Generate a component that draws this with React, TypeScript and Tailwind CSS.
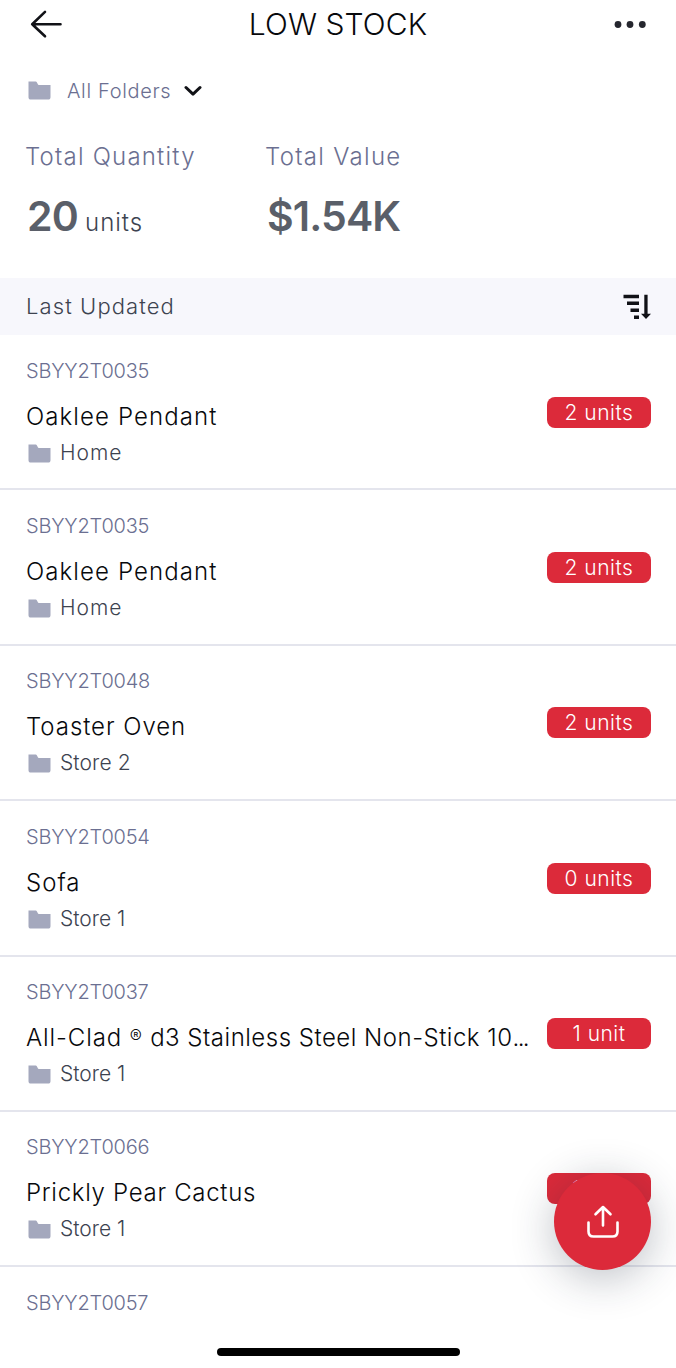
import type { ReactNode } from "react";

interface StockItem {
  id: number;
  code: string;
  name: ReactNode;
  nameClass: string;
  folder: string;
  folderClass: string;
  stock: string;
}

const longName = (
  <>
    All-Clad <sup className="relative top-[-3px] mr-[1px] align-baseline text-[18px] leading-none tracking-normal">®</sup>
    <span className="tracking-[0.5px]"> d3 Stainless Steel Non-Stick 10</span>
    <span className="tracking-[-1.7px]">...</span>
  </>
);

const items: StockItem[] = [
  { id: 1, code: "SBYY2T0035", name: "Oaklee Pendant", nameClass: "tracking-[1.1px]", folder: "Home", folderClass: "tracking-[1px]", stock: "2 units" },
  { id: 2, code: "SBYY2T0035", name: "Oaklee Pendant", nameClass: "tracking-[1.1px]", folder: "Home", folderClass: "tracking-[1px]", stock: "2 units" },
  { id: 3, code: "SBYY2T0048", name: "Toaster Oven", nameClass: "tracking-[0.95px]", folder: "Store 2", folderClass: "tracking-[0.1px]", stock: "2 units" },
  { id: 4, code: "SBYY2T0054", name: "Sofa", nameClass: "tracking-[1px]", folder: "Store 1", folderClass: "tracking-[0px]", stock: "0 units" },
  { id: 5, code: "SBYY2T0037", name: longName, nameClass: "tracking-[0.9px]", folder: "Store 1", folderClass: "tracking-[0px]", stock: "1 unit" },
  { id: 6, code: "SBYY2T0066", name: "Prickly Pear Cactus", nameClass: "tracking-[0.7px]", folder: "Store 1", folderClass: "tracking-[0px]", stock: "1 unit" },
];

function FolderIcon() {
  return (
    <svg className="h-[19px] w-[23px] shrink-0" viewBox="0 0 23 19" fill="#a4a8bd">
      <path d="M.5.5h7.2c.5 0 .9.2 1.1.7l1.2 2.4c.1.3.4.4.7.4h11.8v12.2c0 1.4-.9 2.3-2.3 2.3H2.8C1.4 18.500.5 17.600.5 16.200z" />
    </svg>
  );
}

function Header() {
  return (
    <header className="flex h-[49px] items-center justify-between pl-[30px] pr-[30px]">
      <button aria-label="Back">
        <svg className="h-[30px] w-8" viewBox="0 0 32 30" fill="none" stroke="#111217" strokeWidth="2.6" strokeLinecap="round" strokeLinejoin="round">
          <path d="M30.500 14.200H2.200M15 1.900 2.200 14.200 15 26.300" />
        </svg>
      </button>
      <h1 className="text-[30px] font-light leading-[49px] tracking-[0.1px] text-[#08090c]">LOW STOCK</h1>
      <button aria-label="More">
        <svg className="h-2 w-8" viewBox="0 0 32 8" fill="#25262e">
          <circle cx="4" cy="3.500" r="3.400" />
          <circle cx="16" cy="3.500" r="3.400" />
          <circle cx="28.300" cy="3.500" r="3.400" />
        </svg>
      </button>
    </header>
  );
}

function Summary() {
  return (
    <section className="flex h-[147px] pl-[25px] pt-2.5">
      <div className="w-60">
        <h2 className="text-[24px] font-light leading-8 tracking-[1.2px] text-[#6b6f91]">Total Quantity</h2>
        <p className="mt-[15px] flex items-baseline gap-[7px] pl-0.5 leading-[56px] text-[#5a5f69]">
          <span className="text-[41px] font-semibold tracking-[-0.8px]">20</span>
          <span className="text-2xl font-light leading-[56px] tracking-[1px] text-[#3d4350]">units</span>
        </p>
      </div>
      <div>
        <h2 className="text-[24px] font-light leading-8 tracking-[1.3px] text-[#6b6f91]">Total Value</h2>
        <p className="mt-[15px] pl-0.5 text-[41px] font-semibold leading-[56px] tracking-[-0.9px] text-[#5a5f69]">$1.54K</p>
      </div>
    </section>
  );
}

function SortIcon() {
  return (
    <svg className="mt-px h-[26px] w-7" viewBox="0 0 28 26" fill="#101116">
      <path d="M.5.7H16v3.500H.5zM4 7.600h12v3.500H4zM7.500 14.500H16v3.500H7.500zM11 21.500h5v3.500h-5zM21.300.7h3.300v19.100h3.400L23 25l-5-5.200h3.300z" />
    </svg>
  );
}

function Row({ item }: { item: StockItem }) {
  return (
    <li className="flex h-[155.4px] items-start justify-between border-b-2 border-[#e4e5ed] pl-[26px] pr-[25px]">
      <div className="whitespace-nowrap pt-[23.5px] font-light">
        <p className="text-xl leading-6 tracking-[-0.2px] text-[#6b6f91]">{item.code}</p>
        <h3 className={`mt-[18px] text-[24px] leading-8 text-[#08090c] ${item.nameClass}`}>{item.name}</h3>
        <div className="mt-2 flex items-center gap-[9px] pl-0.5 text-[#3d4350]">
          <div className="pt-px">
            <FolderIcon />
          </div>
          <span className={`text-[21px] leading-6 ${item.folderClass}`}>{item.folder}</span>
        </div>
      </div>
      <span className="mt-[61.5px] h-[31px] w-[104px] shrink-0 rounded-lg bg-[#dc2a3a] text-center text-[21px] font-light leading-[31px] tracking-[0.5px] text-white">
        {item.stock}
      </span>
    </li>
  );
}

function App() {
  return (
    <div className="relative h-[1368px] w-[676px] overflow-hidden bg-white font-['Inter',sans-serif]">
      <Header />
      <button className="flex h-[82px] items-center pl-7">
        <FolderIcon />
        <span className="ml-4 mt-0.5 text-xl font-light tracking-[0.65px] text-[#6b6f91]">All Folders</span>
        <svg className="ml-[13px] mt-0.5 h-3 w-[18px]" viewBox="0 0 18 12" fill="none" stroke="#111217" strokeWidth="3" strokeLinecap="round" strokeLinejoin="round">
          <path d="m2 2.500 7 6.700 7-6.700" />
        </svg>
      </button>
      <Summary />
      <div className="flex h-[57px] items-center justify-between bg-[#f7f7fc] pl-[26px] pr-[25px]">
        <span className="text-[22px] font-light tracking-[1.1px] text-[#3d4350]">Last Updated</span>
        <SortIcon />
      </div>
      <ul>
        {items.map((item) => (
          <Row key={item.id} item={item} />
        ))}
      </ul>
      <p className="pl-[26px] pt-[23.5px] text-xl font-light leading-6 tracking-[-0.2px] text-[#6b6f91]">SBYY2T0057</p>

      {/* Floating share button */}
      <button aria-label="Share" className="absolute left-[554px] top-[1172.5px] flex h-[97px] w-[97px] items-center justify-center rounded-full bg-[#dc2a3a] shadow-[0_8px_44px_rgba(30,40,60,0.3)]">
        <svg className="h-[34px] w-8" viewBox="0 0 32 34" fill="none" stroke="white" strokeWidth="2.600" strokeLinecap="round" strokeLinejoin="round">
          <path d="M16 21.500V3M8.500 10.300 16 3l7.500 7.300M1.500 18.500v9q0 5 5 5h19q5 0 5-5v-9" />
        </svg>
      </button>
      <div className="absolute bottom-3 left-[217px] h-2 w-[243px] rounded-full bg-black" />
    </div>
  );
}

export default App;
